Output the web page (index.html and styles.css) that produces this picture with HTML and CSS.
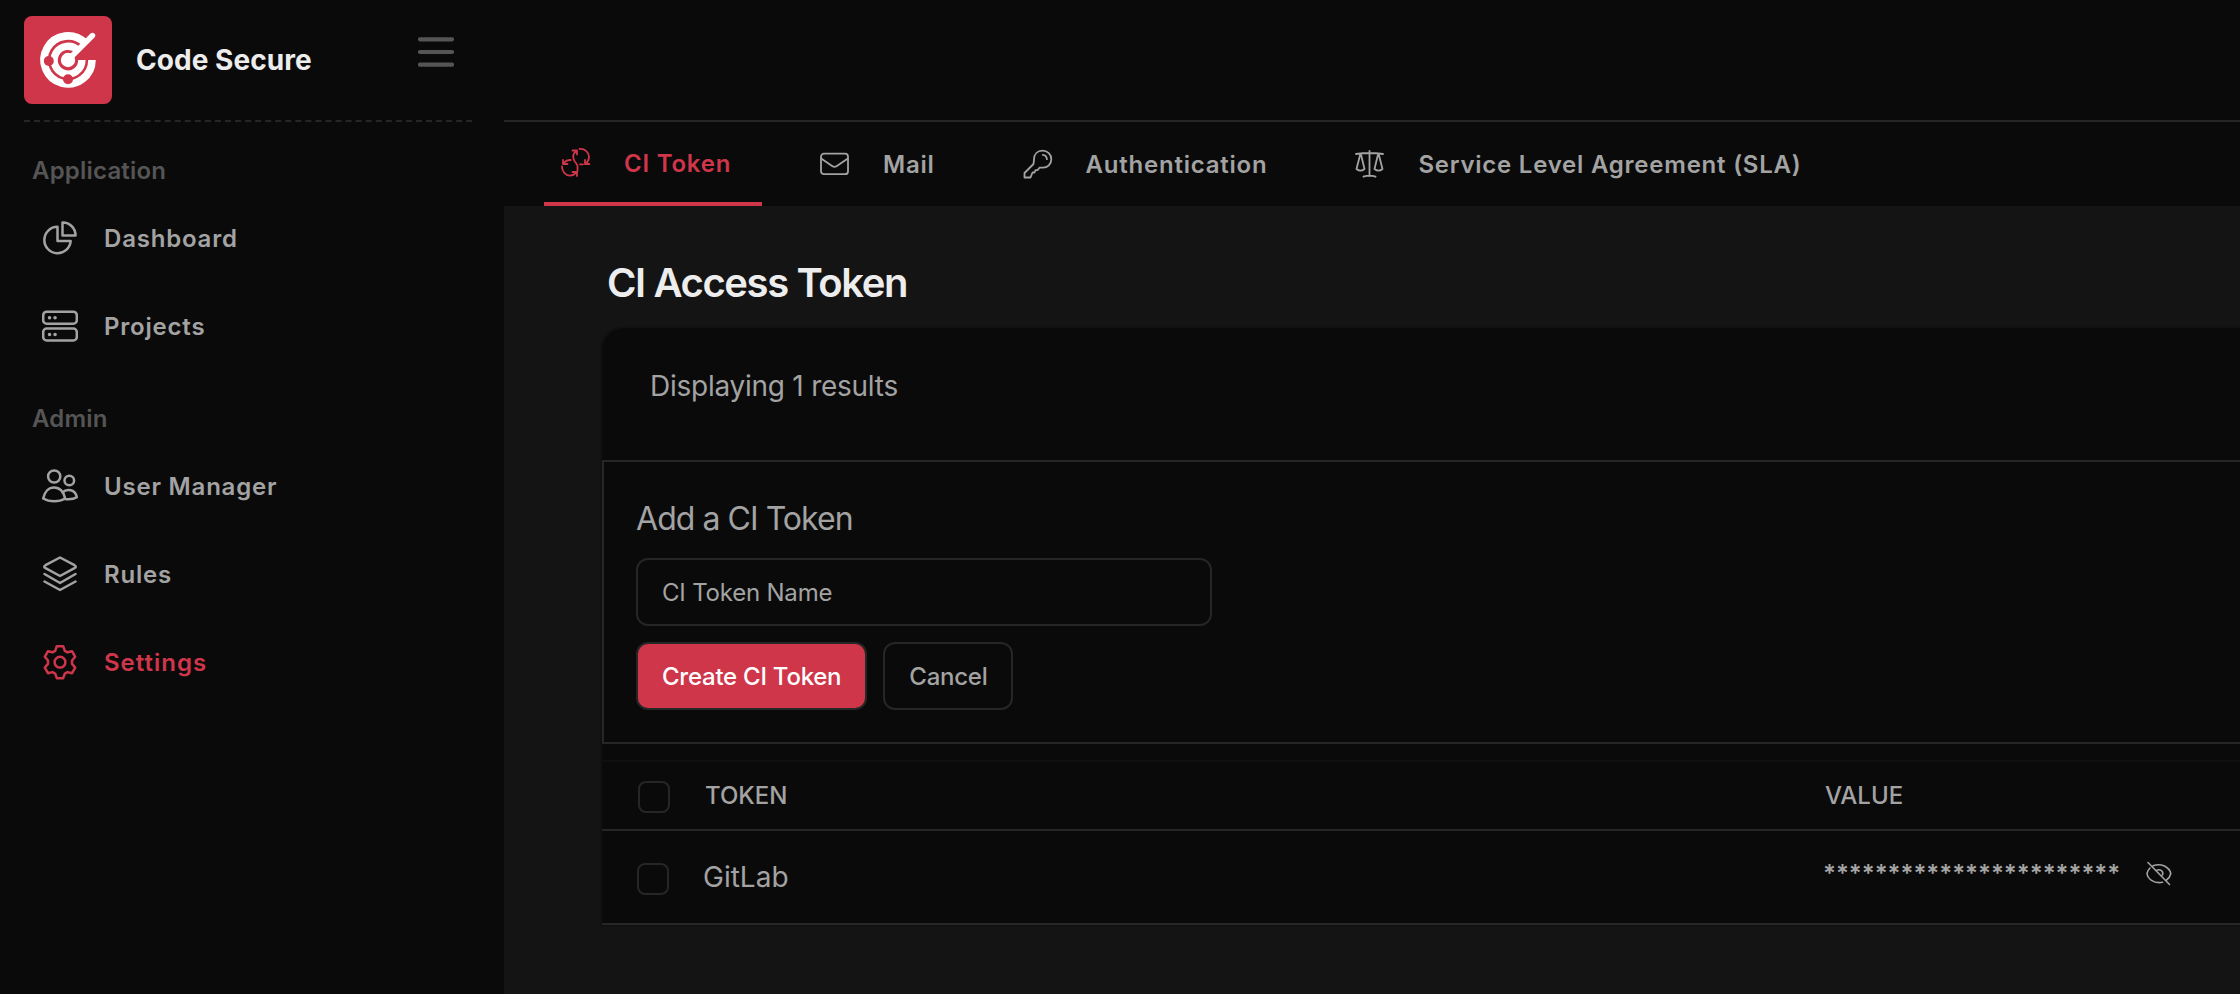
FILE: index.html
```html
<!DOCTYPE html>
<html lang="en">
<head>
<meta charset="utf-8">
<title>Code Secure</title>
<link rel="stylesheet" href="styles.css">
</head>
<body>
<div class="app">
  <aside class="sidebar">
    <div class="brand">
      <svg class="logo" viewBox="0 0 88 88">
        <rect width="88" height="88" rx="8" fill="#cf364a"/>
        <g fill="none" stroke="#fff">
          <path d="M61 27A24 24 0 1 0 68 44" stroke-width="7.600"/>
          <path d="M54 34.500A13.900 13.900 0 1 0 57.900 44" stroke-width="7.400"/>
          <path d="M45 43L68.500 19.500" stroke-width="5.400" stroke-linecap="round"/>
        </g>
        <circle cx="44" cy="44" r="7.200" fill="#fff"/>
        <circle cx="24.800" cy="45" r="5" fill="#cf364a"/>
        <circle cx="44" cy="63.300" r="5" fill="#cf364a"/>
      </svg>
      <h1 class="brand-name">Code Secure</h1>
      <svg class="burger" viewBox="0 0 36 30"><path d="M2 2.300h32M2 15h32M2 27.700h32" stroke="#555" stroke-width="4.200" stroke-linecap="round"/></svg>
    </div>
    <svg class="dashes" viewBox="0 0 448 2"><path d="M0 1h448" stroke="#262626" stroke-width="2" stroke-dasharray="6 4.050"/></svg>
    <nav class="menu">
      <h2 class="group">Application</h2>
      <a class="item"><svg class="ico" viewBox="0 0 36 36"><path d="M15.500 6.800A13.200 13.200 0 1 0 28.700 21H15.500zM20.500 2.500V15.500H33.500A12.800 12.800 0 0 0 20.500 2.500z"/></svg><span>Dashboard</span></a>
      <a class="item"><svg class="ico" viewBox="0 0 36 36"><rect x="1.200" y="3.700" width="33.600" height="12" rx="3.500"/><rect x="1.200" y="20.500" width="33.600" height="12" rx="3.500"/><path d="M7.500 9.700h.1M13 9.700h.1M7.500 26.500h.1M13 26.500h.1" stroke-width="3.500"/></svg><span>Projects</span></a>
      <h2 class="group group-admin">Admin</h2>
      <a class="item"><svg class="ico" viewBox="0 0 36 36"><circle cx="12.200" cy="8.500" r="6.100"/><circle cx="27.300" cy="12.500" r="4.800"/><path d="M1.200 30.500C2.500 23.500 7 19.500 12.200 19.500S22 23.500 23.200 30.500C17 34.200 7.500 34.200 1.200 30.500zM20.500 24.500C25 20 33.500 21.500 34.800 29.200C31.500 31.300 27 31.400 23 31"/></svg><span>User Manager</span></a>
      <a class="item"><svg class="ico" viewBox="0 0 36 36"><path d="M18 1.500L32.500 9.200Q35 10.800 32.500 12.200L18 20L3.500 12.200Q1 10.800 3.500 9.200zM2.500 18L18 27L33.500 18M2.500 25.500L18 34L33.500 25.500"/></svg><span>Rules</span></a>
      <a class="item active"><svg class="ico" viewBox="0 0 36 36"><path d="M14.800 2.200H21.200L22.800 6.800L25.500 8.300L30 7.200L33.200 12.800L30 16.500V19.900L33.200 23.600L30 29.200L25.500 28.100L22.800 29.600L21.200 34.200H14.800L13.200 29.600L10.500 28.100L6 29.200L2.800 23.600L6 19.900V16.500L2.800 12.800L6 7.200L10.500 8.300L13.200 6.800z"/><circle cx="18" cy="18.200" r="5.400"/></svg><span>Settings</span></a>
    </nav>
  </aside>
  <main class="main">
    <header class="topbar"></header>
    <nav class="tabs">
      <a class="tab current"><svg class="ticon" viewBox="0 0 30 30"><path d="M12.500 2.500H17V6.500M16.500 3C12.500 5.500 13 9.500 14 12C15 14.500 17 15.500 17.500 18V23M19.500 1C25 .5 29 4.500 29 8.700Q29 12.500 26 15.300M25 12V16H29.300M20 16.300H23M3 12V16H7.500M10.700 12C7 12 5 13 3.500 15.500M2 18.500C2 24 6 27.700 10 27.700Q13.500 27.500 16.500 24.500M12.500 24H17V28"/></svg><span>CI Token</span></a>
      <a class="tab"><svg class="ticon" viewBox="0 0 30 30"><rect x="1" y="4.700" width="27" height="20.500" rx="3"/><path d="M1.500 9.700L12.500 17.200Q14.500 18.500 16.500 17.200L27.500 9.700"/></svg><span>Mail</span></a>
      <a class="tab"><svg class="ticon" viewBox="0 0 30 30"><path d="M11 10.500C11 5 14.500 1.700 19.500 1.700S28.300 5.500 28.300 10.200C28.300 15.500 24.500 18.700 20 18.700H16.500L14.500 21.200H12.500L11.500 23.500H9.500L7.500 28.500H1.500V24L10.500 15zM19.800 5.800Q23.700 6.300 23.900 10.200"/></svg><span>Authentication</span></a>
      <a class="tab"><svg class="ticon" viewBox="0 0 30 30"><path d="M14.500 2V27M1 5Q14.500 3 28 5M8.500 27.700Q14.500 25.500 20.500 27.700M5.200 5.500L1.500 20Q5.500 23.300 9.500 20L6 5.500M23 5.500L19.500 20Q23.500 23.300 27.500 20L23.800 5.500"/></svg><span>Service Level Agreement (SLA)</span></a>
    </nav>
    <section class="content">
      <h2 class="title">CI Access Token</h2>
      <div class="card">
        <p class="count">Displaying 1 results</p>
        <form class="create">
          <h3 class="form-title">Add a CI Token</h3>
          <div class="field">CI Token Name</div>
          <div class="actions"><button type="button" class="btn primary">Create CI Token</button><button type="button" class="btn">Cancel</button></div>
        </form>
        <div class="row head"><i class="check"></i><span class="col-name">TOKEN</span><span class="col-value">VALUE</span></div>
        <div class="row body"><i class="check"></i><span class="col-name">GitLab</span><span class="col-value"><span class="secret">***********************</span><svg class="eye" viewBox="0 0 26 26"><path d="M7 4.800Q12.500 2.500 18.500 5Q24 8 24.800 12.500Q24 16.500 20.500 19M16.500 21.300Q10 22.500 5.500 19.300Q1.500 16.500 1 12.500Q1.500 9.500 4 7M2 1.500L23.500 23.500M10.500 9.500Q13 8 15.500 9.700Q17.500 11.500 16.500 14"/></svg></span></div>
      </div>
    </section>
  </main>
</div>
</body>
</html>
```

FILE: styles.css
```css
* { box-sizing: border-box; }
body { margin: 0; background: #0a0a0a; color: #a3a3a3; font-family: Inter, "Liberation Sans", sans-serif; font-size: 24px; }
h1, h2, h3, p { margin: 0; font-weight: 400; }
svg { display: block; flex: none; fill: none; }
.app { display: flex; height: 994px; overflow: hidden; }
.sidebar { width: 504px; flex: none; padding: 16px 32px 0 24px; }
.brand { display: flex; height: 104px; align-items: flex-start; }
.logo { width: 88px; height: 88px; }
.brand-name { width: 282px; margin-left: 24px; line-height: 88px; font-size: 28px; font-weight: 700; letter-spacing: .05px; color: #ededed; white-space: nowrap; }
.burger { width: 36px; height: 30px; margin-top: 21px; }
.dashes { width: 448px; height: 2px; }
.menu { padding-top: 33px; }
.group { height: 32px; padding-left: 8px; line-height: 32px; font-size: 24px; font-weight: 600; letter-spacing: .2px; color: #555; }
.group-admin { margin-top: 33px; }
.item { display: flex; align-items: center; height: 88px; padding-left: 18px; gap: 26px; font-weight: 600; letter-spacing: .8px; }
.group + .item { margin-top: 7px; }
.ico { width: 36px; height: 36px; stroke: currentColor; stroke-width: 2.5; stroke-linecap: round; stroke-linejoin: round; }
.active, .current { color: #cf364a; }
.active { letter-spacing: 1px; }
.main { flex: 1; min-width: 0; background: #141414; }
.topbar { height: 122px; background: #0a0a0a; border-bottom: 2px solid #262626; }
.tabs { display: flex; height: 84px; padding-left: 40px; background: #0a0a0a; }
.tab { display: flex; align-items: center; height: 84px; padding-left: 16px; margin-left: 72px; gap: 33px; font-weight: 600; letter-spacing: .77px; white-space: nowrap; }
.current { width: 218px; margin-left: 0; padding-top: 2px; gap: 34px; border-bottom: 4px solid #cf364a; }
.current + .tab { margin-left: 42px; }
.ticon { width: 30px; height: 30px; stroke: currentColor; stroke-width: 1.800; stroke-linecap: round; stroke-linejoin: round; }
.content { padding-left: 96px; }
.title { height: 120px; padding: 52px 0 0 7px; line-height: 50px; font-size: 40px; font-weight: 600; letter-spacing: -1.4px; color: #ededed; }
.card { background: #0a0a0a; border: 2px solid #111; border-right: 0; border-radius: 24px 0 0 0; }
.count { height: 132px; padding: 38px 0 0 48px; font-size: 28px; line-height: 40px; letter-spacing: -.25px; }
.create { height: 284px; margin-bottom: 16px; padding: 32px 0 0 32px; border: 2px solid #262626; border-right: 0; }
.form-title { height: 64px; font-size: 32px; line-height: 50px; letter-spacing: -.95px; }
.field { width: 576px; height: 68px; padding-left: 24px; border: 2px solid #262626; border-radius: 12px; line-height: 66px; letter-spacing: -.2px; }
.actions { display: flex; gap: 16px; margin-top: 16px; }
.btn { height: 68px; padding: 0 24px; border: 2px solid #262626; border-radius: 12px; background: none; color: #a3a3a3; font: 500 24px Inter, sans-serif; letter-spacing: -.25px; }
.primary { background: #cf364a; color: #fff; }
.row { display: flex; align-items: center; border-bottom: 2px solid #262626; }
.head { height: 71px; padding-left: 36px; border-top: 2px solid #101010; font-weight: 500; }
.body { height: 94px; padding-left: 35px; }
.check { width: 32px; height: 32px; border: 2px solid #262626; border-radius: 8px; }
.head .check { margin-top: 2px; }
.body .check { margin-top: 3px; }
.col-name { width: 1120px; margin-left: 34px; }
.head .col-name { margin-left: 35px; }
.body .col-name { font-size: 28px; }
.col-value { display: flex; align-items: center; }
.body .col-value { padding-bottom: 7px; }
.secret { font-weight: 600; letter-spacing: -.03px; }
.eye { width: 26px; height: 26px; margin-left: 26px; stroke: currentColor; stroke-width: 1.600; stroke-linecap: round; }
```
